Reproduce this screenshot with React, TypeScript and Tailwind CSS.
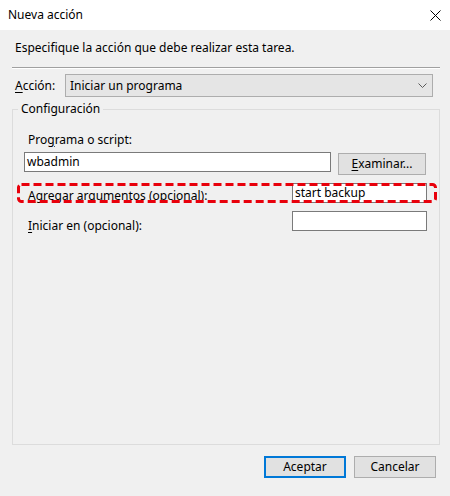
import React from "react";

function TextBox({ value, className }: { value?: string; className: string }) {
  return (
    <div
      className={`h-[20px] border border-[#7a7a7a] bg-white px-[2px] leading-[18px] ${className}`}
    >
      {value}
    </div>
  );
}

function Button({
  children,
  primary,
  className = "",
}: {
  children: React.ReactNode;
  primary?: boolean;
  className?: string;
}) {
  return (
    <button
      className={`flex h-[22px] items-center justify-center bg-[#e1e1e1] leading-none ${
        primary ? "border-2 border-[#0078d7]" : "border border-[#adadad]"
      } ${className}`}
    >
      {children}
    </button>
  );
}

export default function App() {
  return (
    <div className="flex h-[496px] w-[450px] flex-col bg-[#f0f0f0] font-['Segoe_UI','Noto_Sans',sans-serif] text-[12px] text-black">
      {/* barra de título */}
      <div className="flex h-[30px] shrink-0 items-center justify-between bg-white pl-[8px] pr-[8px]">
        <span className="leading-[16px]">Nueva acción</span>
        <svg width="11" height="11" viewBox="0 0 11 11" className="mr-[1px]">
          <path d="M0.5 0.5 L10.5 10.5 M10.5 0.5 L0.5 10.5" stroke="#000" strokeWidth="1" />
        </svg>
      </div>

      <div className="flex flex-1 flex-col pl-[12px]">
        <p className="ml-[3px] mt-[10px] leading-[16px]">
          Especifique la acción que debe realizar esta tarea.
        </p>

        <div className="mt-[11px] h-[2px] w-[428px] border-b border-t border-b-white border-t-[#a0a0a0]" />

        <div className="mt-[5px] flex items-center">
          <span className="ml-[3px] w-[50px] leading-[16px]">
            <u className="underline-offset-[2px]">A</u>cción:
          </span>
          <div className="flex h-[23px] w-[368px] items-center justify-between border border-[#adadad] bg-[#e5e5e5] pl-[4px] pr-[5px]">
            <span>Iniciar un programa</span>
            <svg width="9" height="5" viewBox="0 0 9 5">
              <path d="M0.5 0.5 L4.5 4.5 L8.5 0.5" fill="none" stroke="#5a5a5a" strokeWidth="1" />
            </svg>
          </div>
        </div>

        <fieldset className="mt-[4px] h-[344px] w-[428px] border border-[#dcdcdc] pl-[11px]">
          <legend className="-ml-[6px] px-[3px] leading-[16px]">Configuración</legend>

          <div className="ml-[4px] mt-[15px] leading-[16px]">
            Pro<u className="underline-offset-[2px]">g</u>rama o script:
          </div>

          <div className="mt-[4px] flex items-start">
            <TextBox value="wbadmin" className="w-[307px]" />
            <Button className="ml-[7px] mt-[1px] w-[88px]">
              <span>
                <u className="underline-offset-[2px]">E</u>xaminar...
              </span>
            </Button>
          </div>

          <div className="relative mt-[8px] flex items-start">
            <span className="ml-[4px] mt-[5px] w-[264px] leading-[16px]">
              A<u className="underline-offset-[2px]">g</u>regar argumentos (opcional):
            </span>
            <TextBox value="start backup" className="w-[135px]" />
            <svg
              width="420"
              height="20"
              viewBox="0 0 420 20"
              className="pointer-events-none absolute left-[-7px] top-0"
            >
              <rect
                x="1.5"
                y="1.5"
                width="417"
                height="17"
                rx="3"
                fill="none"
                stroke="#e8000b"
                strokeWidth="3"
                strokeDasharray="8 4"
              />
            </svg>
          </div>

          <div className="mt-[7px] flex items-start">
            <span className="ml-[4px] mt-[7px] w-[264px] leading-[16px]">
              <u className="underline-offset-[2px]">I</u>niciar en (opcional):
            </span>
            <TextBox className="w-[135px]" />
          </div>
        </fieldset>

        <div className="mt-[11px] flex gap-[8px] pl-[252px]">
          <Button primary className="w-[82px]">
            Aceptar
          </Button>
          <Button className="w-[82px]">Cancelar</Button>
        </div>
      </div>
    </div>
  );
}
